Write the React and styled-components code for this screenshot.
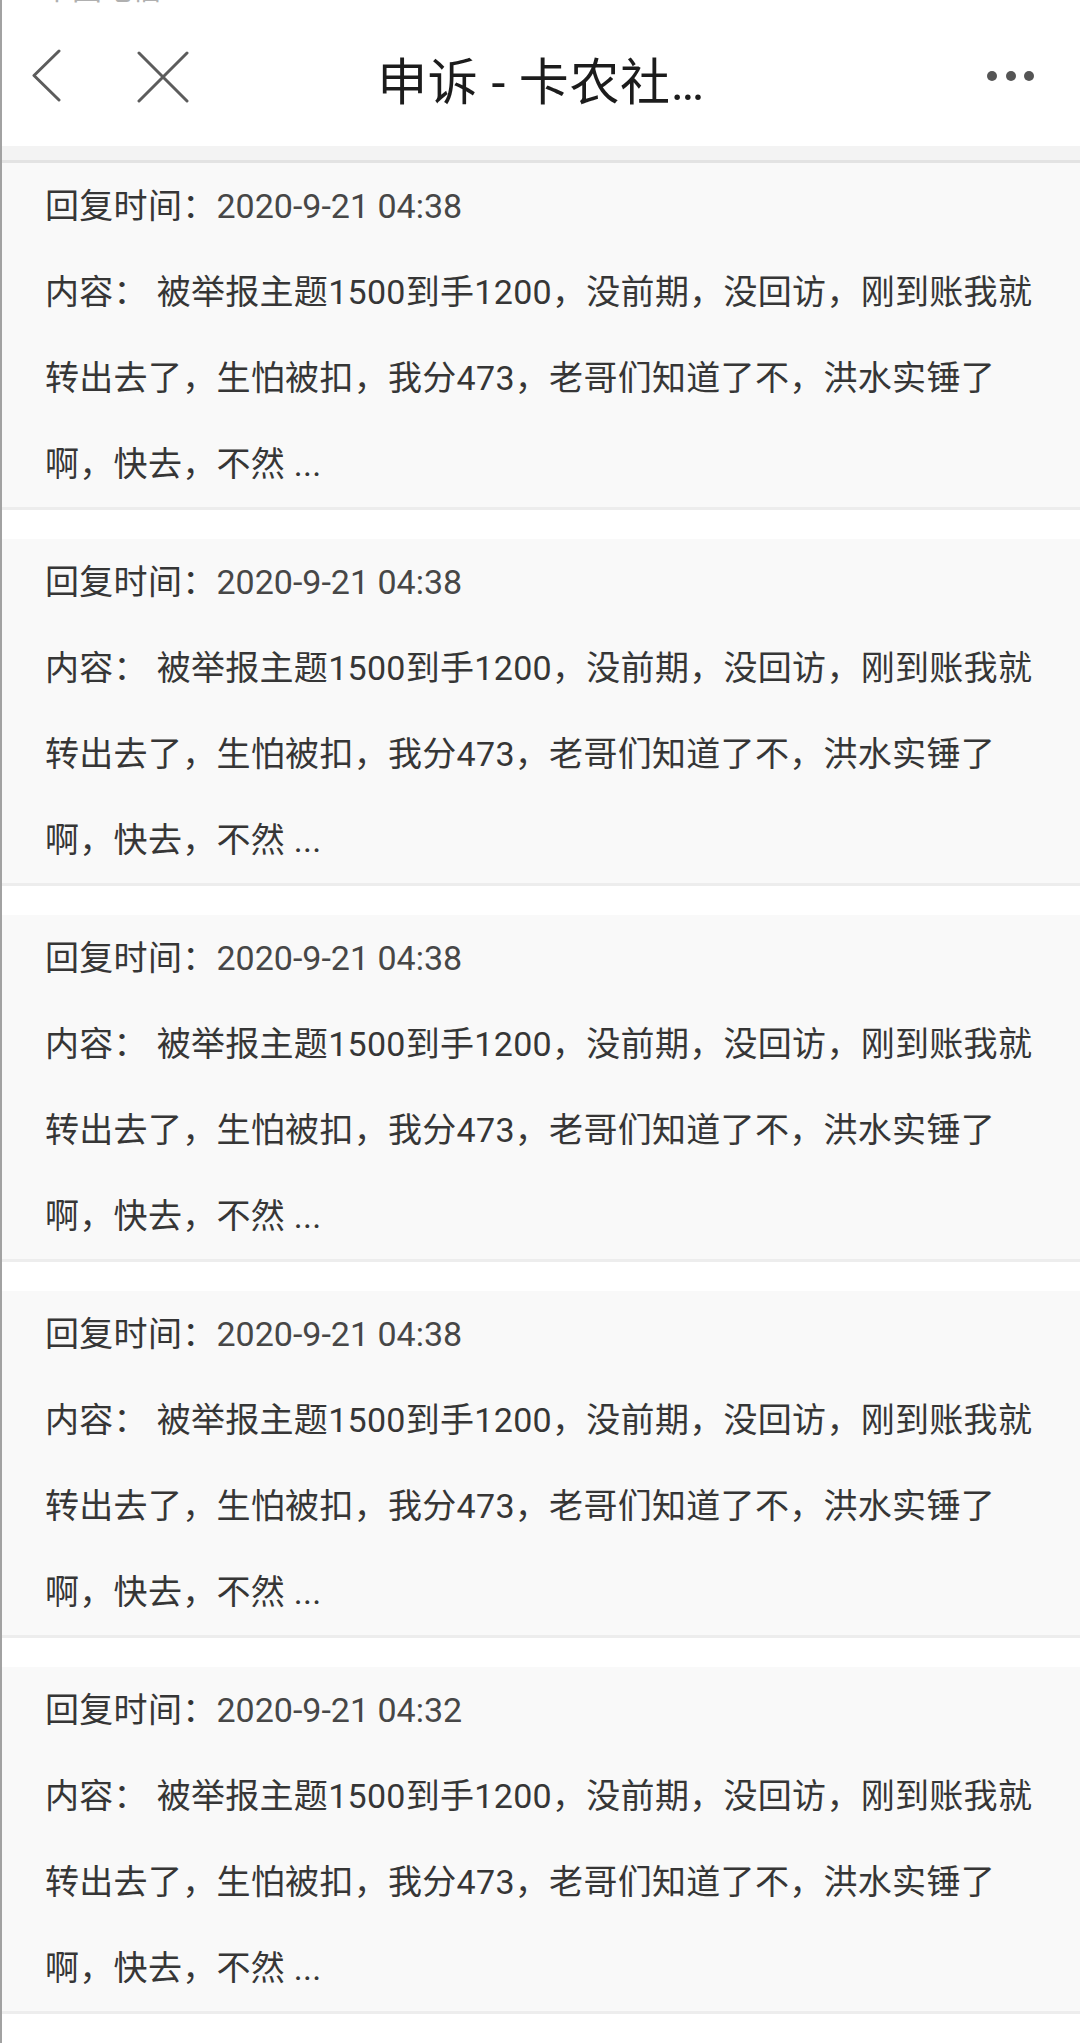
import React from 'react';
import styled, { createGlobalStyle } from 'styled-components';

const replies = [
  { time: '2020-9-21 04:38' },
  { time: '2020-9-21 04:38' },
  { time: '2020-9-21 04:38' },
  { time: '2020-9-21 04:38' },
  { time: '2020-9-21 04:32' },
];

const contentLines = [
  '被举报主题1500到手1200，没前期，没回访，刚到账我就',
  '转出去了，生怕被扣，我分473，老哥们知道了不，洪水实锤了',
  '啊，快去，不然 ...',
];

const GlobalStyle = createGlobalStyle`
  html, body {
    margin: 0;
    padding: 0;
    background: #ffffff;
  }
  body {
    font-family: Roboto, "Noto Sans CJK SC", "Noto Sans", sans-serif;
    -webkit-font-smoothing: antialiased;
  }
`;

const Page = styled.div`
  min-height: 100vh;
  border-left: 2px solid #a2a2a2;
  background: #ffffff;
`;

const StatusStrip = styled.div`
  height: 6px;
  overflow: hidden;
  padding-left: 40px;
  span {
    display: block;
    margin-top: -26px;
    font-size: 30px;
    line-height: 30px;
    color: #b0b0b0;
  }
`;

const NavBar = styled.header`
  height: 140px;
  display: grid;
  grid-template-columns: 1fr auto 1fr;
  align-items: center;
`;

const NavLeft = styled.div`
  display: flex;
  align-items: center;
  gap: 74px;
  padding-left: 30px;
`;

const NavRight = styled.div`
  display: flex;
  justify-content: flex-end;
  padding-right: 43px;
`;

const Title = styled.h1`
  margin: 0;
  padding-top: 4px;
  font-size: 50px;
  font-weight: 400;
  letter-spacing: 0.6px;
  color: #1c1c1c;
  white-space: nowrap;
`;

const IconButton = styled.button`
  border: none;
  background: none;
  padding: 0;
  display: flex;
  cursor: pointer;
`;

const NavShadow = styled.div`
  height: 14px;
  background: #f3f3f3;
  border-bottom: 3px solid #e3e3e3;
`;

const List = styled.main`
  display: flex;
  flex-direction: column;
  gap: 29px;
`;

const Card = styled.section`
  background: #f9f9f9;
  border-bottom: 3px solid #ededed;
  padding-left: 43px;
`;

const Line = styled.p`
  margin: 0;
  height: 86px;
  line-height: 86px;
  font-size: 34px;
  letter-spacing: 0.3px;
  color: #363636;
  white-space: nowrap;
`;

const Value = styled.span`
  color: #474747;
  letter-spacing: 0;
`;

const BackIcon = () => (
  <svg width="30" height="54" viewBox="0 0 30 54">
    <path d="M27 2 L2 26.5 L27 51" fill="none" stroke="#5c5c5c" strokeWidth="3" strokeLinecap="round" strokeLinejoin="round" />
  </svg>
);

const CloseIcon = () => (
  <svg width="54" height="54" viewBox="0 0 54 54">
    <path d="M3 4 L51 52 M51 4 L3 52" fill="none" stroke="#5c5c5c" strokeWidth="3" strokeLinecap="round" />
  </svg>
);

const MoreIcon = () => (
  <svg width="50" height="12" viewBox="0 0 50 12">
    <circle cx="5" cy="6" r="5" fill="#555555" />
    <circle cx="24" cy="6" r="5" fill="#555555" />
    <circle cx="42" cy="6" r="5" fill="#555555" />
  </svg>
);

const ReplyCard = ({ time }) => (
  <Card>
    <Line>
      回复时间：<Value>{time}</Value>
    </Line>
    <Line>内容： {contentLines[0]}</Line>
    <Line>{contentLines[1]}</Line>
    <Line>{contentLines[2]}</Line>
  </Card>
);

const App = () => {
  return (
    <>
      <GlobalStyle />
      <Page>
        <StatusStrip>
          <span>中国电信</span>
        </StatusStrip>
        <NavBar>
          <NavLeft>
            <IconButton aria-label="返回">
              <BackIcon />
            </IconButton>
            <IconButton aria-label="关闭">
              <CloseIcon />
            </IconButton>
          </NavLeft>
          <Title>申诉 - 卡农社…</Title>
          <NavRight>
            <IconButton aria-label="更多">
              <MoreIcon />
            </IconButton>
          </NavRight>
        </NavBar>
        <NavShadow />
        <List>
          {replies.map((r, i) => (
            <ReplyCard key={i} time={r.time} />
          ))}
        </List>
      </Page>
    </>
  );
};

export default App;
